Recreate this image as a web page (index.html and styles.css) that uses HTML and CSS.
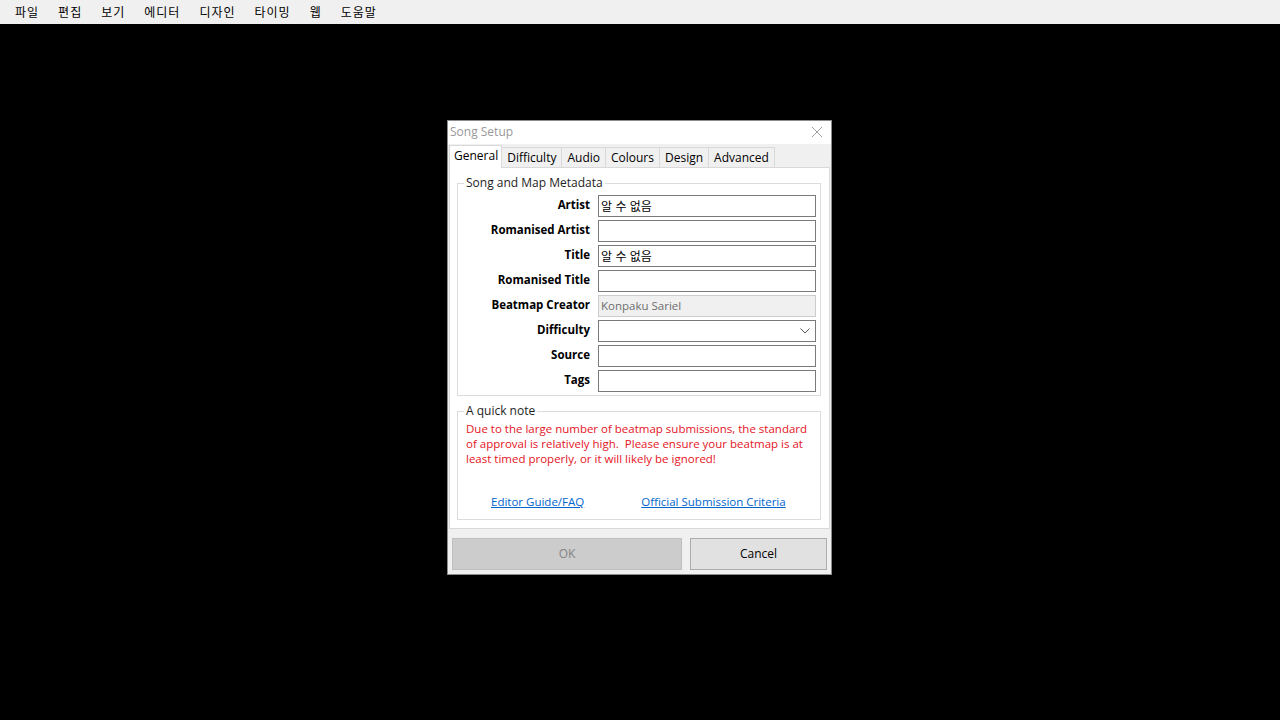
FILE: index.html
```html
<!DOCTYPE html>
<html lang="ko">
<head>
    <meta charset="UTF-8">
    <title>Song Setup</title>
    <link rel="stylesheet" href="styles.css">
</head>
<body>
    <div class="menubar">
        <span>파일</span>
        <span>편집</span>
        <span>보기</span>
        <span>에디터</span>
        <span>디자인</span>
        <span>타이밍</span>
        <span>웹</span>
        <span>도움말</span>
    </div>

    <div class="desktop">
        <div class="dialog">
            <div class="titlebar">
                <span class="title">Song Setup</span>
                <svg class="close" width="12" height="12" viewBox="0 0 12 12">
                    <path d="M1 1 L11 11 M11 1 L1 11" stroke="#a0a0a0" stroke-width="1" fill="none"/>
                </svg>
            </div>

            <div class="client">
                <div class="tabs">
                    <div class="tab active">General</div>
                    <div class="tab">Difficulty</div>
                    <div class="tab">Audio</div>
                    <div class="tab">Colours</div>
                    <div class="tab">Design</div>
                    <div class="tab">Advanced</div>
                </div>

                <div class="panel">
                    <fieldset class="group">
                        <legend>Song and Map Metadata</legend>
                        <div class="row">
                            <label>Artist</label>
                            <div class="field">알 수 없음</div>
                        </div>
                        <div class="row">
                            <label>Romanised Artist</label>
                            <div class="field"></div>
                        </div>
                        <div class="row">
                            <label>Title</label>
                            <div class="field">알 수 없음</div>
                        </div>
                        <div class="row">
                            <label>Romanised Title</label>
                            <div class="field"></div>
                        </div>
                        <div class="row">
                            <label>Beatmap Creator</label>
                            <div class="field disabled">Konpaku Sariel</div>
                        </div>
                        <div class="row">
                            <label>Difficulty</label>
                            <div class="field combo">
                                <svg width="10" height="6" viewBox="0 0 10 6">
                                    <path d="M0.5 0.5 L5 5 L9.5 0.5" stroke="#555" stroke-width="1" fill="none"/>
                                </svg>
                            </div>
                        </div>
                        <div class="row">
                            <label>Source</label>
                            <div class="field"></div>
                        </div>
                        <div class="row">
                            <label>Tags</label>
                            <div class="field"></div>
                        </div>
                    </fieldset>

                    <fieldset class="group note">
                        <legend>A quick note</legend>
                        <p class="warning">Due to the large number of beatmap submissions, the standard<br>of approval is relatively high.&nbsp; Please ensure your beatmap is at<br>least timed properly, or it will likely be ignored!</p>
                        <div class="links">
                            <a href="#">Editor Guide/FAQ</a>
                            <a href="#">Official Submission Criteria</a>
                        </div>
                    </fieldset>
                </div>

                <div class="buttons">
                    <button class="btn ok" disabled>OK</button>
                    <button class="btn cancel">Cancel</button>
                </div>
            </div>
        </div>
    </div>
</body>
</html>
```

FILE: styles.css
```css
/* Estilos base */
html, body {
    margin: 0;
    padding: 0;
    background: #000;
}

body {
    font-family: "Open Sans", "Noto Sans CJK KR", sans-serif;
    font-size: 11.5px;
    color: #000;
    width: 1280px;
    height: 720px;
    overflow: hidden;
}

/* Barra de menú */
.menubar {
    height: 24px;
    background: #f0f0f0;
    display: flex;
    align-items: center;
    gap: 19px;
    padding-left: 15px;
    font-family: "Noto Sans CJK KR", sans-serif;
    font-size: 12px;
    letter-spacing: 1px;
    line-height: 24px;
}

.desktop {
    padding: 96px 0 0 447px;
}

/* Ventana */
.dialog {
    width: 383px;
    height: 453px;
    border: 1px solid #8c8c8c;
    background: #f0f0f0;
    display: flex;
    flex-direction: column;
}

.titlebar {
    height: 23px;
    background: #fff;
    display: flex;
    align-items: center;
    justify-content: space-between;
    padding: 0 8px 0 2px;
}

.title {
    color: #999;
    font-size: 12px;
    line-height: 16px;
    margin-top: -2px;
}

.close {
    margin-top: -1px;
}

.client {
    flex: 1;
    display: flex;
    flex-direction: column;
    padding: 1px 0 0 1px;
}

/* Pestañas */
.tabs {
    display: flex;
    align-items: flex-end;
    height: 22px;
    font-size: 12px;
}

.tab {
    height: 19px;
    line-height: 19px;
    padding: 0 5px;
    border: 1px solid #d9d9d9;
    border-bottom: none;
    border-left: none;
    background: #f0f0f0;
}

.tab.active {
    height: 22px;
    line-height: 20px;
    background: #fff;
    border-left: 1px solid #d9d9d9;
    padding: 0 3px 0 4px;
    margin-bottom: -1px;
    position: relative;
}

.panel {
    box-sizing: border-box;
    width: 381px;
    height: 362px;
    background: #fff;
    border: 1px solid #d9d9d9;
    padding: 7px 0 0 7px;
}

/* Cuadros de grupo */
.group {
    margin: 0;
    padding: 4px 4px 3px 0;
    width: 364px;
    box-sizing: border-box;
    border: 1px solid #dcdcdc;
}

.group legend {
    margin-left: 6px;
    padding: 0 2px;
    line-height: 16px;
    color: #1e1e1e;
    font-size: 12px;
}

.row {
    display: flex;
    align-items: center;
    gap: 8px;
    height: 22px;
    margin-bottom: 3px;
}

.row:last-child {
    margin-bottom: 0;
}

.row label {
    width: 132px;
    text-align: right;
    font-weight: bold;
    margin-top: -3px;
}

.field {
    width: 218px;
    height: 22px;
    box-sizing: border-box;
    border: 1px solid #7a7a7a;
    background: #fff;
    padding: 0 2px;
    line-height: 19px;
    font-family: "Noto Sans CJK KR", sans-serif;
    font-size: 12px;
}

.field.disabled {
    background: #f0f0f0;
    border-color: #cccccc;
    color: #6d6d6d;
    font-family: "Open Sans", sans-serif;
    font-size: 11.5px;
}

.field.combo {
    display: flex;
    align-items: center;
    justify-content: flex-end;
    padding-right: 5px;
}

.note {
    margin-top: 7px;
    padding: 2px 0 10px 0;
}

.warning {
    margin: 0;
    padding-left: 8px;
    color: #e4141e;
    line-height: 15px;
    white-space: nowrap;
}

.links {
    display: flex;
    gap: 57px;
    padding-left: 33px;
    margin-top: 28px;
    line-height: 15px;
}

.links a {
    color: #0066cc;
}

/* Botones */
.buttons {
    display: flex;
    gap: 8px;
    padding: 9px 0 0 3px;
}

.btn {
    height: 32px;
    font-family: "Open Sans", sans-serif;
    font-size: 12px;
    padding: 0 0 1px 0;
}

.btn.ok {
    width: 230px;
    background: #cccccc;
    border: 1px solid #bfbfbf;
    color: #838383;
}

.btn.cancel {
    width: 137px;
    background: #e1e1e1;
    border: 1px solid #adadad;
    color: #000;
}
```
